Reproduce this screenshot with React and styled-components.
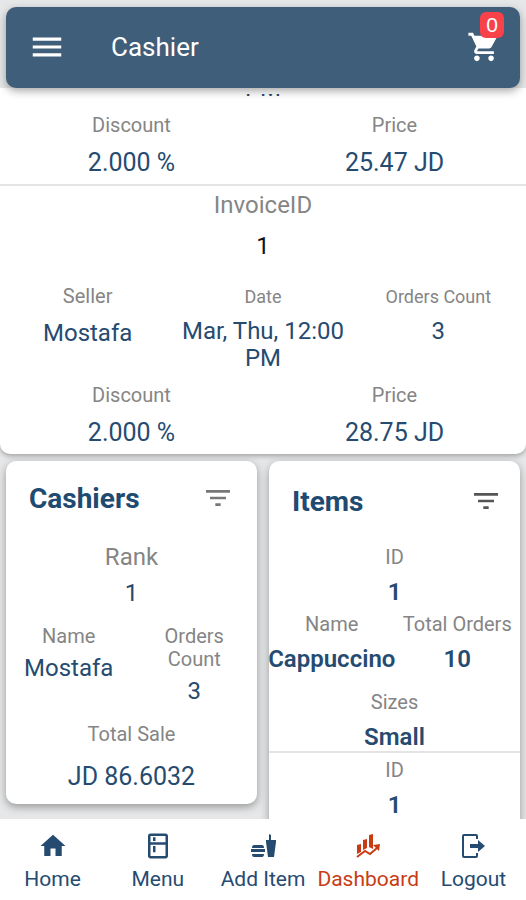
import React from 'react'
import styled, { createGlobalStyle } from 'styled-components'
import { MdMenu, MdShoppingCart, MdFilterList, MdHome, MdOutlineKitchen } from 'react-icons/md'

const invoices = [
    { date: 'Mar, Thu, 12:00 PM', discount: '2.000 %', price: '25.47 JD' },
    { id: '1', seller: 'Mostafa', date: 'Mar, Thu, 12:00 PM', count: '3', discount: '2.000 %', price: '28.75 JD' },
]

const items = [
    { id: '1', name: 'Cappuccino', total: '10', size: 'Small' },
    { id: '1' },
]

const links = [
    { name: 'Home', icon: <MdHome size={30} /> },
    { name: 'Menu', icon: <MdOutlineKitchen size={30} /> },
    { name: 'Add Item', icon: <FastFoodIcon /> },
    { name: 'Dashboard', icon: <ChartIcon />, active: true },
    { name: 'Logout', icon: <LogoutIcon /> },
]

function FastFoodIcon() {
    return (
        <svg width="30" height="30" viewBox="0 0 30 30" fill="currentColor" aria-hidden="true">
            <path d="M6 14h8q2 0 2 3H4q0-3 2-3zM3 18h14v3H3zM4 23h12q0 3-2 3H6q-2 0-2-3z" />
            <path d="M18 9h3V3l2 1v5h5v2H18zM18 11h10l-2 15h-6z" />
        </svg>
    )
}

function ChartIcon() {
    return (
        <svg width="30" height="30" viewBox="0 0 30 30" fill="currentColor" aria-hidden="true">
            <path d="M4 14l4-1v8l-4 2zM10 9l4-1v9l-4 2zM16 4l4-1v15l-4-2z" />
            <path d="M4 26l8-6 5 3 7-6" fill="none" stroke="currentColor" strokeWidth="2" />
            <path d="M20 14l7-1-1 7z" />
        </svg>
    )
}

function LogoutIcon() {
    return (
        <svg width="30" height="30" viewBox="0 0 30 30" fill="none" stroke="currentColor" strokeWidth="2" aria-hidden="true">
            <path d="M19 8V5q0-1-1-1H6q-1 0-1 1v20q0 1 1 1h12q1 0 1-1v-3" />
            <path d="M12 13h8V9l7 6-7 6v-4h-8z" fill="currentColor" stroke="none" />
        </svg>
    )
}

function Field({ label, value, ...rest }) {
    return (
        <FieldBox {...rest}>
            <dt>{label}</dt>
            <dd>{value}</dd>
        </FieldBox>
    )
}

export default function App() {
    return (
        <>
            <GlobalStyle />
            <Page>
                <TopBar>
                    <IconButton aria-label="Open menu"><MdMenu size={38} /></IconButton>
                    <Title>Cashier</Title>
                    <CartButton aria-label="Cart">
                        <MdShoppingCart size={34} />
                        <Badge>0</Badge>
                    </CartButton>
                </TopBar>

                <Content>
                    <Invoices>
                        {invoices.map((e, i) =>
                            <Invoice key={i}>
                                {e.id &&
                                    <InvoiceIdBox>
                                        <Field label="InvoiceID" value={e.id} $size={24} $gap={16} $dark />
                                    </InvoiceIdBox>
                                }
                                <Columns $count={3}>
                                    {e.seller && <Field label="Seller" value={e.seller} $gap={12} />}
                                    <Field label="Date" value={e.date} $size={18} $gap={10} $column={2} />
                                    {e.count && <Field label="Orders Count" value={e.count} $size={18} $gap={10} />}
                                </Columns>
                                <Columns $count={2}>
                                    <Field label="Discount" value={e.discount} $gap={12} $wide />
                                    <Field label="Price" value={e.price} $gap={12} $wide />
                                </Columns>
                            </Invoice>
                        )}
                    </Invoices>

                    <Cards>
                        <Card>
                            <CardHead>
                                <h2>Cashiers</h2>
                                <IconButton aria-label="Filter cashiers"><MdFilterList size={32} /></IconButton>
                            </CardHead>
                            <CashierBody>
                                <Field label="Rank" value="1" $size={24} $gap={11} />
                                <Columns $count={2}>
                                    <Field label="Name" value="Mostafa" $gap={7} $narrow />
                                    <Field label="Orders Count" value="3" $gap={7} $narrow />
                                </Columns>
                                <Field label="Total Sale" value="JD 86.6032" $gap={17} $wide />
                            </CashierBody>
                        </Card>
                        <Card>
                            <CardHead $tall>
                                <h2>Items</h2>
                                <IconButton aria-label="Filter items"><MdFilterList size={32} /></IconButton>
                            </CardHead>
                            {items.map((e, i) =>
                                <Item key={i}>
                                    <Field label="ID" value={e.id} $gap={10} $bold />
                                    {e.name &&
                                        <Columns $count={2}>
                                            <Field label="Name" value={e.name} $gap={10} $bold />
                                            <Field label="Total Orders" value={e.total} $gap={10} $bold />
                                        </Columns>
                                    }
                                    {e.size &&
                                        <SizesBox>
                                            <Field label="Sizes" value={e.size} $gap={10} $bold />
                                        </SizesBox>
                                    }
                                </Item>
                            )}
                        </Card>
                    </Cards>
                </Content>

                <BottomNav>
                    {links.map((e) =>
                        <NavLink key={e.name} href="#" $active={e.active}>
                            {e.icon}
                            {e.name}
                        </NavLink>
                    )}
                </BottomNav>
            </Page>
        </>
    )
}

const GlobalStyle = createGlobalStyle`
*{
    box-sizing: border-box;
}
body{
    margin: 0;
    font-family: Roboto, "Liberation Sans", sans-serif;
    background: #e6e7e8;
}
h1, h2, dl, dt, dd{
    margin: 0;
}
`

const Page = styled.div`
display: flex;
flex-direction: column;
height: 100vh;
padding-top: 7px;
overflow: hidden;
`

const TopBar = styled.header`
display: flex;
align-items: center;
flex: none;
height: 81px;
margin: 0 6px;
padding: 0 19px 2px 22px;
border-radius: 10px;
background: #3f5e7a;
color: white;
box-shadow: 0 3px 9px rgba(0, 0, 0, 0.35);
z-index: 1;
`

const IconButton = styled.button`
display: flex;
padding: 0;
border: 0;
background: none;
color: inherit;
cursor: pointer;
`

const Title = styled.h1`
flex: 1;
margin-left: 45px;
font-size: 26px;
font-weight: 400;
`

const CartButton = styled(IconButton)`
position: relative;
`

const Badge = styled.span`
position: absolute;
top: -18px;
right: -3px;
width: 24px;
border-radius: 6px;
background: #f9414a;
font-size: 21px;
line-height: 26px;
text-align: center;
`

const Content = styled.main`
display: flex;
flex-direction: column;
flex: 1;
min-height: 0;
overflow: hidden;
`

/* scrolled to its end, so only the last rows show */
const Invoices = styled.section`
display: flex;
flex-direction: column;
justify-content: flex-end;
flex: none;
height: 366px;
overflow: hidden;
border-top: 6px solid white;
border-radius: 0 0 10px 10px;
background: white;
box-shadow: 0 2px 5px rgba(0, 0, 0, 0.3);
`

const Invoice = styled.dl`
display: flex;
flex-direction: column;
flex: none;
gap: 12px;
padding: 8px 0;
& + &{
    border-top: 2px solid #e4e4e4;
}
`

const InvoiceIdBox = styled.div`
padding-bottom: 13px;
`

const Columns = styled.div`
display: grid;
grid-template-columns: repeat(${(p) => p.$count}, minmax(0, 1fr));
`

const FieldBox = styled.div`
display: flex;
flex-direction: column;
align-items: center;
grid-column: ${(p) => p.$column || 'auto'};
gap: ${(p) => p.$gap}px;
padding: 0 ${(p) => (p.$narrow ? 8 : 0)}px;
text-align: center;
dt{
    color: #858585;
    font-size: ${(p) => p.$size || 20}px;
    line-height: 23px;
}
dd{
    color: ${(p) => (p.$dark ? '#111' : '#264b70')};
    font-size: ${(p) => (p.$wide ? 25 : 24)}px;
    font-weight: ${(p) => (p.$bold ? 600 : 400)};
    line-height: 27px;
}
`

const Cards = styled.section`
display: grid;
grid-template-columns: 1fr 1fr;
align-items: start;
gap: 12px;
padding: 7px 6px 0;
`

const Card = styled.article`
border-radius: 10px;
background: white;
box-shadow: 0 3px 8px rgba(0, 0, 0, 0.35);
`

const CardHead = styled.div`
display: flex;
align-items: center;
justify-content: space-between;
height: ${(p) => (p.$tall ? 80 : 74)}px;
padding: 0 ${(p) => (p.$tall ? 18 : 23)}px 0 23px;
color: ${(p) => (p.$tall ? '#555' : '#777')};
h2{
    color: #204a70;
    font-size: 28px;
    font-weight: 700;
}
`

const CashierBody = styled.dl`
display: flex;
flex-direction: column;
gap: 18px;
padding: 11px 0 14px;
`

const Item = styled.dl`
display: flex;
flex-direction: column;
gap: 7px;
padding: 5px 0 0;
& + &{
    border-top: 2px solid #e4e4e4;
    padding: 6px 0 20px;
}
`

const SizesBox = styled.div`
padding-top: 11px;
`

const BottomNav = styled.nav`
display: grid;
grid-template-columns: repeat(5, 1fr);
flex: none;
height: 81px;
padding-top: 12px;
background: white;
z-index: 1;
`

const NavLink = styled.a`
display: flex;
flex-direction: column;
align-items: center;
gap: 6px;
color: ${(p) => (p.$active ? '#c83c14' : '#264b70')};
font-size: 21px;
line-height: 24px;
text-decoration: none;
white-space: nowrap;
`
